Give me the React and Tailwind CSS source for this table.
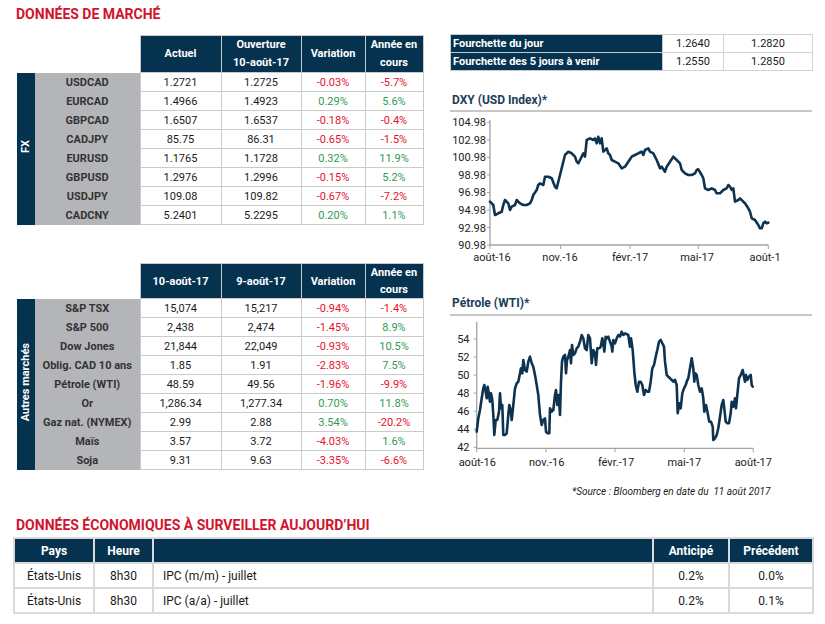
import React from "react";

const fx = [
    ["USDCAD", "1.2721", "1.2725", "-0.03%", "-5.7%"],
    ["EURCAD", "1.4966", "1.4923", "0.29%", "5.6%"],
    ["GBPCAD", "1.6507", "1.6537", "-0.18%", "-0.4%"],
    ["CADJPY", "85.75", "86.31", "-0.65%", "-1.5%"],
    ["EURUSD", "1.1765", "1.1728", "0.32%", "11.9%"],
    ["GBPUSD", "1.2976", "1.2996", "-0.15%", "5.2%"],
    ["USDJPY", "109.08", "109.82", "-0.67%", "-7.2%"],
    ["CADCNY", "5.2401", "5.2295", "0.20%", "1.1%"],
];

const autres = [
    ["S&P TSX", "15,074", "15,217", "-0.94%", "-1.4%"],
    ["S&P 500", "2,438", "2,474", "-1.45%", "8.9%"],
    ["Dow Jones", "21,844", "22,049", "-0.93%", "10.5%"],
    ["Oblig. CAD 10 ans", "1.85", "1.91", "-2.83%", "7.5%"],
    ["Pétrole (WTI)", "48.59", "49.56", "-1.96%", "-9.9%"],
    ["Or", "1,286.34", "1,277.34", "0.70%", "11.8%"],
    ["Gaz nat. (NYMEX)", "2.99", "2.88", "3.54%", "-20.2%"],
    ["Maïs", "3.57", "3.72", "-4.03%", "1.6%"],
    ["Soja", "9.31", "9.63", "-3.35%", "-6.6%"],
];

const dxyPts = [
    [150, 335], [160, 345], [165, 375], [175, 370], [185, 365], [190, 345], [195, 330], [205, 340], [210, 360],
    [215, 350], [225, 345], [230, 330], [235, 335], [240, 340], [250, 345], [260, 345], [270, 340], [275, 330],
    [280, 315], [290, 300], [295, 285], [300, 280], [310, 285], [315, 260], [325, 260], [335, 265], [345, 290],
    [350, 295], [355, 275], [360, 255], [365, 235], [370, 215], [375, 195], [385, 185], [395, 190], [405, 200],
    [410, 215], [415, 220], [420, 210], [430, 190], [435, 200], [440, 150], [450, 145], [460, 150], [465, 145],
    [470, 160], [475, 140], [480, 160], [485, 145], [490, 185], [500, 175], [505, 190], [510, 195], [515, 210],
    [525, 215], [535, 220], [545, 235], [555, 230], [565, 215], [575, 200], [585, 195], [595, 190], [605, 185],
    [610, 195], [615, 180], [625, 175], [630, 185], [640, 190], [650, 210], [660, 235], [665, 230], [675, 245],
    [680, 230], [690, 215], [700, 200], [710, 210], [720, 220], [725, 240], [735, 250], [745, 255], [755, 255],
    [765, 250], [770, 240], [775, 238], [785, 255], [790, 265], [795, 295], [805, 300], [815, 295], [825, 300],
    [830, 310], [840, 310], [850, 300], [860, 295], [865, 285], [870, 290], [875, 300], [880, 295], [885, 335],
    [895, 330], [900, 325], [910, 335], [915, 340], [925, 355], [930, 365], [935, 385], [945, 390], [955, 405],
    [960, 415], [965, 415], [970, 400], [975, 395], [980, 400], [985, 398],
];

const wtiPts = [
    [110, 440], [115, 400], [120, 375], [125, 340], [130, 310], [133, 300], [137, 320], [140, 340], [143, 305],
    [147, 330], [150, 350], [153, 325], [157, 345], [160, 390], [163, 450], [167, 405], [172, 405], [177, 380],
    [180, 325], [183, 370], [187, 360], [190, 450], [195, 450], [200, 445], [205, 390], [208, 360], [212, 375],
    [215, 405], [220, 360], [225, 310], [230, 295], [235, 290], [240, 265], [243, 250], [247, 265], [250, 225],
    [255, 255], [260, 260], [265, 230], [270, 215], [275, 235], [280, 245], [285, 270], [290, 300], [295, 330],
    [300, 390], [305, 420], [310, 405], [315, 400], [318, 440], [323, 445], [328, 445], [330, 370], [335, 380],
    [340, 375], [345, 330], [348, 315], [352, 360], [356, 330], [360, 390], [363, 290], [366, 230], [370, 215],
    [375, 210], [378, 265], [381, 225], [385, 215], [390, 195], [393, 235], [396, 180], [400, 210], [405, 205],
    [410, 190], [415, 185], [420, 170], [425, 150], [430, 160], [435, 190], [440, 195], [445, 150], [450, 160],
    [455, 235], [460, 195], [465, 205], [468, 240], [472, 190], [478, 190], [482, 185], [487, 160], [490, 175],
    [493, 200], [497, 155], [500, 160], [505, 155], [510, 170], [515, 185], [517, 200], [520, 165], [525, 175],
    [530, 160], [535, 150], [540, 155], [545, 140], [550, 150], [555, 145], [565, 150], [570, 185], [573, 160],
    [578, 195], [583, 260], [587, 300], [592, 320], [597, 290], [602, 290], [607, 300], [612, 330], [617, 315],
    [622, 320], [627, 320], [632, 290], [637, 250], [642, 240], [647, 215], [652, 195], [657, 170], [662, 165],
    [667, 175], [672, 185], [675, 230], [680, 270], [685, 275], [690, 280], [695, 285], [700, 290], [705, 285],
    [710, 300], [713, 385], [718, 355], [722, 370], [727, 325], [732, 310], [737, 300], [742, 285], [745, 280],
    [750, 250], [755, 220], [760, 250], [763, 290], [766, 265], [770, 270], [775, 300], [780, 320], [785, 310],
    [790, 340], [793, 380], [798, 360], [803, 385], [808, 410], [813, 410], [818, 425], [820, 465], [825, 460],
    [830, 450], [835, 430], [840, 395], [845, 360], [850, 345], [853, 370], [857, 410], [862, 415], [867, 415],
    [872, 385], [875, 350], [880, 365], [885, 340], [888, 370], [892, 330], [897, 280], [902, 270], [908, 255],
    [912, 275], [915, 290], [918, 270], [922, 285], [927, 275], [932, 270], [935, 300], [938, 305],
];

// traced points are in 3x zoom coords, shift them into the chart's own box
const toLine = (pts, dx, dy) =>
    pts.map(([x, y]) => `${(x / 3 + dx).toFixed(1)},${(y / 3 + dy).toFixed(1)}`).join(" ");

const tone = (v) => (v.startsWith("-") ? "text-[#e8112d]" : "text-[#2f9b52]");

function MarketTable({ side, headers, rows, headHeight, headLeading }) {
    return (
        <table className="border-collapse table-fixed w-[406px] text-[11px]">
            <colgroup>
                <col className="w-[18px]" />
                <col className="w-[105px]" />
                <col className="w-[81px]" />
                <col className="w-[80px]" />
                <col className="w-[64px]" />
                <col className="w-[58px]" />
            </colgroup>
            <thead>
                <tr className={headHeight}>
                    <th colSpan={2}></th>
                    {headers.map((h) => (
                        <th
                            key={h}
                            className={`bg-[#05324f] text-white font-bold border border-[#c9c9c9] px-0 ${headLeading}`}
                        >
                            {h.split("\n").map((l) => (
                                <div key={l}>{l}</div>
                            ))}
                        </th>
                    ))}
                </tr>
            </thead>
            <tbody>
                {rows.map((r, i) => (
                    <tr key={r[0]} className="h-[19px] leading-[13px]">
                        {i === 0 && (
                            <td rowSpan={rows.length} className="bg-[#05324f] p-0 text-center align-middle">
                                <span className="inline-block [writing-mode:vertical-rl] rotate-180 text-white font-bold text-[11px] leading-[18px] whitespace-nowrap">
                                    {side}
                                </span>
                            </td>
                        )}
                        <td className="bg-[#b4b5b8] text-center font-bold text-[#333] whitespace-nowrap">{r[0]}</td>
                        <td className="border border-[#cbcbcb] text-center text-[#1a1a1a]">{r[1]}</td>
                        <td className="border border-[#cbcbcb] text-center text-[#1a1a1a]">{r[2]}</td>
                        <td className={`border border-[#cbcbcb] text-center ${tone(r[3])}`}>{r[3]}</td>
                        <td className={`border border-[#cbcbcb] text-center ${tone(r[4])}`}>{r[4]}</td>
                    </tr>
                ))}
            </tbody>
        </table>
    );
}

function DxyChart() {
    const labels = ["104.98", "102.98", "100.98", "98.98", "96.98", "94.98", "92.98", "90.98"];
    const xs = [
        ["août-16", 42, 40],
        ["nov.-16", 110, 110.7],
        ["févr.-17", 180, 180],
        ["mai-17", 247, 248.3],
        ["août-1", 315, 318.3],
    ];
    return (
        <svg width="362" height="154" className="block">
            <line x1="40" y1="8" x2="40" y2="133" stroke="#a3a3a3" strokeWidth="1.3" />
            <line x1="40" y1="133" x2="318.3" y2="133" stroke="#a3a3a3" strokeWidth="1.3" />
            {labels.map((l, i) => (
                <g key={l}>
                    <line x1="37" x2="40" y1={10.3 + i * 17.54} y2={10.3 + i * 17.54} stroke="#a3a3a3" />
                    <text x="36" y={10.3 + i * 17.54 + 4} textAnchor="end" fontSize="11" fill="#222">
                        {l}
                    </text>
                </g>
            ))}
            {xs.map(([l, cx, tx]) => (
                <g key={l}>
                    <line x1={tx} x2={tx} y1="133" y2="137" stroke="#a3a3a3" />
                    <text x={cx} y="149" textAnchor="middle" fontSize="11" fill="#222">
                        {l}
                    </text>
                </g>
            ))}
            <polyline
                points={toLine(dxyPts, -10, -22)}
                fill="none"
                stroke="#0d3350"
                strokeWidth="2.6"
                strokeLinejoin="round"
                strokeLinecap="round"
            />
        </svg>
    );
}

function WtiChart() {
    const labels = ["54", "52", "50", "48", "46", "44", "42"];
    const xs = [
        ["août-16", 27.3, 26.7],
        ["nov.-16", 96.7, 96],
        ["févr.-17", 166, 165],
        ["mai-17", 234.3, 234.3],
        ["août-17", 303.3, 303.3],
    ];
    return (
        <svg width="362" height="156" className="block">
            <line x1="26.7" y1="5.7" x2="26.7" y2="132.3" stroke="#a3a3a3" strokeWidth="1.3" />
            <line x1="26.7" y1="132.3" x2="303.3" y2="132.3" stroke="#a3a3a3" strokeWidth="1.3" />
            {labels.map((l, i) => (
                <g key={l}>
                    <line x1="23.7" x2="26.7" y1={23 + i * 18.05} y2={23 + i * 18.05} stroke="#a3a3a3" />
                    <text x="19.5" y={23 + i * 18.05 + 4} textAnchor="end" fontSize="11" fill="#222">
                        {l}
                    </text>
                </g>
            ))}
            {xs.map(([l, cx, tx]) => (
                <g key={l}>
                    <line x1={tx} x2={tx} y1="132.3" y2="136.3" stroke="#a3a3a3" />
                    <text x={cx} y="150" textAnchor="middle" fontSize="11" fill="#222">
                        {l}
                    </text>
                </g>
            ))}
            <polyline
                points={toLine(wtiPts, -10, -31)}
                fill="none"
                stroke="#0d3350"
                strokeWidth="2.6"
                strokeLinejoin="round"
                strokeLinecap="round"
            />
        </svg>
    );
}

export default function App() {
    return (
        <div className="w-[825px] h-[624px] bg-white overflow-hidden font-['Roboto','Liberation_Sans',sans-serif] pl-[16px] pt-[6px]">
            <h1 className="text-[14px] leading-[16px] font-bold text-[#d0142c]">DONNÉES DE MARCHÉ</h1>

            <div className="flex mt-[13px] h-[463px]">
                <div className="ml-[1px] w-[406px]">
                    <MarketTable
                        side="FX"
                        headers={["Actuel", "Ouverture\n10-août-17", "Variation", "Année en\ncours"]}
                        rows={fx}
                        headHeight="h-[37px]"
                        headLeading="leading-[18px]"
                    />
                    <div className="mt-[38px]">
                        <MarketTable
                            side="Autres marchés"
                            headers={["10-août-17", "9-août-17", "Variation", "Année en\ncours"]}
                            rows={autres}
                            headHeight="h-[34px]"
                            headLeading="leading-[17px]"
                        />
                    </div>
                </div>

                <div className="ml-[27px] w-[362px]">
                    <table className="border-collapse table-fixed w-[362px] text-[11px] -mt-[1px]">
                        <colgroup>
                            <col className="w-[212px]" />
                            <col className="w-[61px]" />
                            <col className="w-[89px]" />
                        </colgroup>
                        <tbody>
                            {[
                                ["Fourchette du jour", "1.2640", "1.2820"],
                                ["Fourchette des 5 jours à venir", "1.2550", "1.2850"],
                            ].map((r) => (
                                <tr key={r[0]} className="h-[18px] leading-[13px]">
                                    <td className="bg-[#05324f] text-white font-bold pl-[2px] border border-[#c9c9c9] whitespace-nowrap">
                                        {r[0]}
                                    </td>
                                    <td className="border border-[#d2d2d2] text-center text-[#1a1a1a]">{r[1]}</td>
                                    <td className="border border-[#d2d2d2] text-center text-[#1a1a1a]">{r[2]}</td>
                                </tr>
                            ))}
                        </tbody>
                    </table>

                    <div className="mt-[21px] text-[12px] leading-[16px] font-bold text-[#1c3d58] pl-[2px] pb-[2px] border-b-2 border-[#c8c8c8]">
                        DXY (USD Index)*
                    </div>
                    <DxyChart />

                    <div className="mt-[29px] text-[12px] leading-[16px] font-bold text-[#1c3d58] pl-[2px] pb-[3px] border-b-2 border-[#c8c8c8]">
                        Pétrole (WTI)*
                    </div>
                    <WtiChart />

                    <p className="mt-[14px] pl-[122px] text-[10px] leading-[12px] italic text-[#222] whitespace-nowrap">
                        *Source : Bloomberg en date du&nbsp; 11 août 2017
                    </p>
                </div>
            </div>

            <h2 className="mt-[19px] text-[14px] leading-[16px] font-bold text-[#d0142c]">
                DONNÉES ÉCONOMIQUES À SURVEILLER AUJOURD’HUI
            </h2>

            <table className="mt-[4px] -ml-[3px] border-collapse table-fixed w-[799px] text-[12px]">
                <colgroup>
                    <col className="w-[80px]" />
                    <col className="w-[59px]" />
                    <col className="w-[500px]" />
                    <col className="w-[76px]" />
                    <col className="w-[84px]" />
                </colgroup>
                <thead>
                    <tr className="h-[25px]">
                        <th className="bg-[#05324f] text-white font-bold border-2 border-[#d9d9d9]">Pays</th>
                        <th className="bg-[#05324f] text-white font-bold border-2 border-[#d9d9d9]">Heure</th>
                        <th className="bg-[#05324f] border-2 border-[#d9d9d9]"></th>
                        <th className="bg-[#05324f] text-white font-bold border-2 border-[#d9d9d9]">Anticipé</th>
                        <th className="bg-[#05324f] text-white font-bold border-2 border-[#d9d9d9]">Précédent</th>
                    </tr>
                </thead>
                <tbody>
                    {[
                        ["États-Unis", "8h30", "IPC (m/m) - juillet", "0.2%", "0.0%"],
                        ["États-Unis", "8h30", "IPC (a/a) - juillet", "0.2%", "0.1%"],
                    ].map((r) => (
                        <tr key={r[2]} className="h-[25px] text-[#1a1a1a]">
                            <td className="border-2 border-[#d9d9d9] text-center">{r[0]}</td>
                            <td className="border-2 border-[#d9d9d9] text-center">{r[1]}</td>
                            <td className="border-2 border-[#d9d9d9] pl-[9px]">{r[2]}</td>
                            <td className="border-2 border-[#d9d9d9] text-center">{r[3]}</td>
                            <td className="border-2 border-[#d9d9d9] text-center">{r[4]}</td>
                        </tr>
                    ))}
                </tbody>
            </table>
        </div>
    );
}
